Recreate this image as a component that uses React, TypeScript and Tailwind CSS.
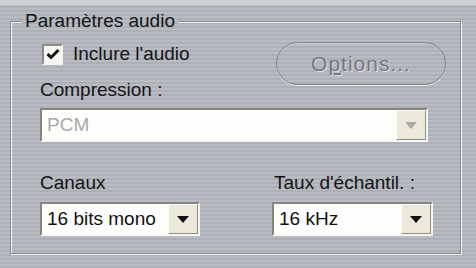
import { ReactNode } from "react";

const stripes =
  "bg-[image:repeating-linear-gradient(to_bottom,#b9bcc3_0px,#b9bcc3_2px,#adb0b7_2px,#adb0b7_4px)]";

const Arrow = ({ color }: { color: string }) => (
  <svg width="12" height="7" viewBox="0 0 12 7">
    <polygon points="0,0 12,0 6,7" fill={color} />
  </svg>
);

const Combo = ({
  value,
  width,
  disabled,
}: {
  value: ReactNode;
  width: string;
  disabled?: boolean;
}) => (
  <div
    className={`flex h-[34px] ${width} border-2 border-t-[#85857d] border-l-[#85857d] border-r-[#f6f6f2] border-b-[#f6f6f2] bg-[#fdfdfb]`}
  >
    <div
      className={`flex-1 flex items-center pl-[5px] ${disabled ? "text-[#a9a9a7]" : "text-[#111]"}`}
    >
      {value}
    </div>
    <div className="w-[30px] flex items-center justify-center bg-[#ebe8dc] border border-t-[#fbfbf7] border-l-[#fbfbf7] border-r-[#8e8c80] border-b-[#8e8c80]">
      <Arrow color={disabled ? "#a9a9a5" : "#111"} />
    </div>
  </div>
);

export default function App() {
  return (
    <div
      className={`w-[476px] h-[268px] overflow-hidden ${stripes} font-['Liberation_Sans',Arial,sans-serif] text-[19px] leading-[22px] text-[#141414]`}
    >
      <div className="h-[5px] bg-[#d0d1d5]" />

      {/* Group box */}
      <fieldset className="ml-[10px] mt-[5px] w-[451px] h-[244px] border border-[#868990] shadow-[inset_1px_1px_0_#f1f2f4,1px_1px_0_#f1f2f4] pl-[29px] pr-[14px]">
        <legend className={`-ml-[18px] px-[3px] bg-fixed ${stripes}`}>
          Paramètres audio
        </legend>

        <div className="mt-[10px] flex justify-between items-start">
          <div className="pt-[1px]">
            <label className="flex items-center gap-[10px] ml-[2px]">
              <span className="w-[21px] h-[21px] flex items-center justify-center border-2 border-t-[#8b8b84] border-l-[#8b8b84] border-r-[#f4f4ef] border-b-[#f4f4ef] bg-[#f8f8f3]">
                <svg width="14" height="12" viewBox="0 0 14 12">
                  <path d="M1.5 6 L5 9.5 L12.5 2" stroke="#111" strokeWidth="3" fill="none" />
                </svg>
              </span>
              Inclure l'audio
            </label>
            <div className="mt-[14px]">Compression :</div>
          </div>
          <button className="w-[170px] h-[43px] rounded-full border border-[#7d8087] shadow-[inset_0_1px_0_#c9cbd0,0_1px_0_#eef0f2] text-[21px] tracking-[1px] text-[#74777e] [text-shadow:1px_1px_0_#dcdee2]">
            O<span className="underline">p</span>tions...
          </button>
        </div>

        <div className="mt-[7px]">
          <Combo value="PCM" width="w-[388px]" disabled />
        </div>

        <div className="mt-[30px] flex">
          <div className="w-[232px]">
            <div>Canaux</div>
            <div className="mt-[8px]">
              <Combo value="16 bits mono" width="w-[160px]" />
            </div>
          </div>
          <div>
            <div className="ml-[2px]">Taux d'échantil. :</div>
            <div className="mt-[8px]">
              <Combo value="16 kHz" width="w-[161px]" />
            </div>
          </div>
        </div>
      </fieldset>
    </div>
  );
}
